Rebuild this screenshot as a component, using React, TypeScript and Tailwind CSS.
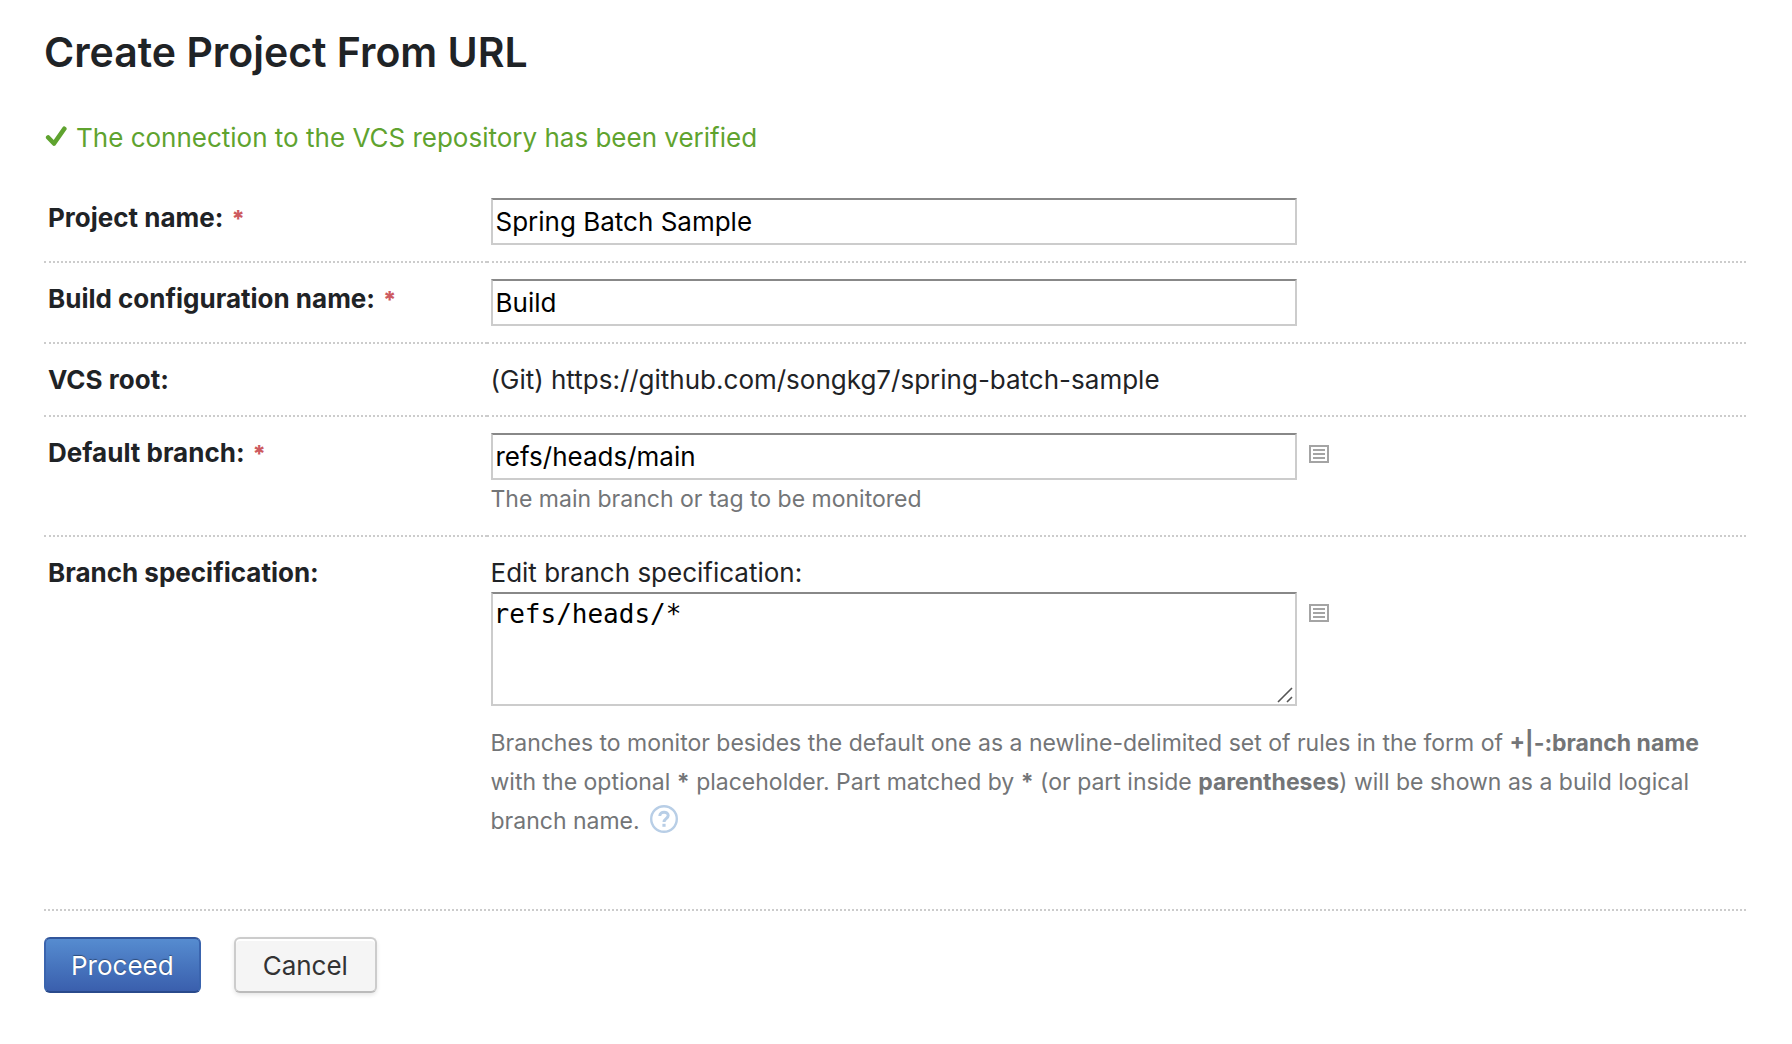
import { useState } from "react";
import type { ReactNode } from "react";

function FieldRow({
  label,
  htmlFor,
  required = false,
  last = false,
  children,
}: {
  label: string;
  htmlFor?: string;
  required?: boolean;
  last?: boolean;
  children: ReactNode;
}) {
  const border = last ? "" : "border-b-2 border-dotted border-[#ccc]";
  return (
    <div className="flex leading-[39px]">
      <div className={`w-[26%] shrink-0 px-1 py-4 font-bold ${border}`}>
        {htmlFor ? <label htmlFor={htmlFor}>{label}</label> : label}
        {required && <span className="ml-2 text-[23px] leading-none font-extrabold text-[#cd5a5f]">*</span>}
      </div>
      <div className={`min-w-0 flex-1 px-1 py-4 ${border}`}>{children}</div>
    </div>
  );
}

const fieldBorder = "block border-2 border-[#ccc] border-t-[#888] bg-white text-black outline-none";

function TextInput({ id, initial }: { id: string; initial: string }) {
  const [value, setValue] = useState(initial);
  return (
    <input
      id={id}
      type="text"
      value={value}
      onChange={(e) => setValue(e.target.value)}
      className={`${fieldBorder} h-[47px] w-[806px] max-w-[90%] px-[3px]`}
    />
  );
}

function ListButton({ label }: { label: string }) {
  return (
    <button type="button" aria-label={label} className="mt-3 ml-3 shrink-0">
      <svg width="20" height="18" viewBox="0 0 20 18" className="block">
        <rect x="1" y="1" width="18" height="16" fill="none" stroke="#a4a4a4" strokeWidth="2" />
        <path d="M4 5h12M4 9h12M4 13h12" stroke="#a4a4a4" strokeWidth="2" />
      </svg>
    </button>
  );
}

export default function App() {
  const [spec, setSpec] = useState("refs/heads/*");
  return (
    <main className="min-h-screen bg-white pt-6 pr-[46px] pb-12 pl-11 font-['Inter',sans-serif] text-[26px] text-[#1f2326]">
      <h1 className="text-[41px] leading-14 font-semibold">Create Project From URL</h1>

      <p className="mt-10 mb-[26px] flex items-center leading-9 text-[#5fa32f]">
        <svg width="24" height="24" viewBox="0 0 24 24" className="mr-2 shrink-0">
          <path
            d="M4.2 11.5L10 17.5L20.3 2.8"
            fill="none"
            stroke="#5fa32f"
            strokeWidth="4.6"
            strokeLinecap="round"
            strokeLinejoin="round"
          />
        </svg>
        The connection to the VCS repository has been verified
      </p>

      <form onSubmit={(e) => e.preventDefault()}>
        <FieldRow label="Project name:" htmlFor="project" required>
          <TextInput id="project" initial="Spring Batch Sample" />
        </FieldRow>
        <FieldRow label="Build configuration name:" htmlFor="build" required>
          <TextInput id="build" initial="Build" />
        </FieldRow>
        <FieldRow label="VCS root:">(Git) https://github.com/songkg7/spring-batch-sample</FieldRow>
        <FieldRow label="Default branch:" htmlFor="branch" required>
          <div className="flex items-start">
            <TextInput id="branch" initial="refs/heads/main" />
            <ListButton label="Select default branch" />
          </div>
          <div className="text-[23px] text-[#737577]">The main branch or tag to be monitored</div>
        </FieldRow>
        <FieldRow label="Branch specification:" last>
          <label htmlFor="spec" className="block">
            Edit branch specification:
          </label>
          <div className="flex items-start">
            <div className="relative">
              <textarea
                id="spec"
                value={spec}
                onChange={(e) => setSpec(e.target.value)}
                className={`${fieldBorder} h-[114px] w-[806px] resize px-px font-['DejaVu_Sans_Mono',monospace] text-[26px] leading-10 [&::-webkit-resizer]:bg-transparent`}
              />
              <svg
                width="16"
                height="16"
                viewBox="0 0 16 16"
                className="pointer-events-none absolute right-1 bottom-[3px]"
              >
                <path d="M1 15L15 1M10 15L15 10" stroke="#555" strokeWidth="1.6" />
              </svg>
            </div>
            <ListButton label="Select branches" />
          </div>
          <p className="mt-[18px] text-[23px] text-[#737577]">
            Branches to monitor besides the default one as a newline-delimited set of rules in the form of{" "}
            <b>+|-:branch name</b> with the optional <b>*</b> placeholder. Part matched by <b>*</b> (or part inside{" "}
            <b>parentheses</b>) will be shown as a build logical branch name.{" "}
            <a href="#help" aria-label="Help" className="ml-1 inline-block align-[-4px] leading-none">
              <svg width="28" height="28" viewBox="0 0 28 28" fill="none" stroke="#b8cee6" className="block">
                <circle cx="14" cy="14" r="12.8" strokeWidth="2.4" />
                <path d="M9.8 11C9.8 6 18.2 6 18.2 10.6C18.2 13.6 14 13.8 14 17" strokeWidth="3" />
                <path d="M14 18.8v3" strokeWidth="3.2" />
              </svg>
            </a>
          </p>
        </FieldRow>

        <div className="mt-[52px] flex gap-[33px] border-t-2 border-dotted border-[#ccc] pt-[26px]">
          <button
            type="submit"
            className="h-14 rounded-md border-2 border-x-[#3a64ae] border-t-[#32569b] border-b-[#294a8c] bg-linear-to-b from-[#568cd0] to-[#3a5fad] px-[25px] text-white text-shadow-[0_-1px_1px_#00000060]"
          >
            Proceed
          </button>
          <button
            type="button"
            className="h-14 rounded-md border-2 border-[#ccc] border-b-[#bbb] bg-[#f5f5f5] px-[27px] text-[#333] shadow-[inset_0_2px_0_#fff,0_2px_4px_#0000001a]"
          >
            Cancel
          </button>
        </div>
      </form>
    </main>
  );
}
